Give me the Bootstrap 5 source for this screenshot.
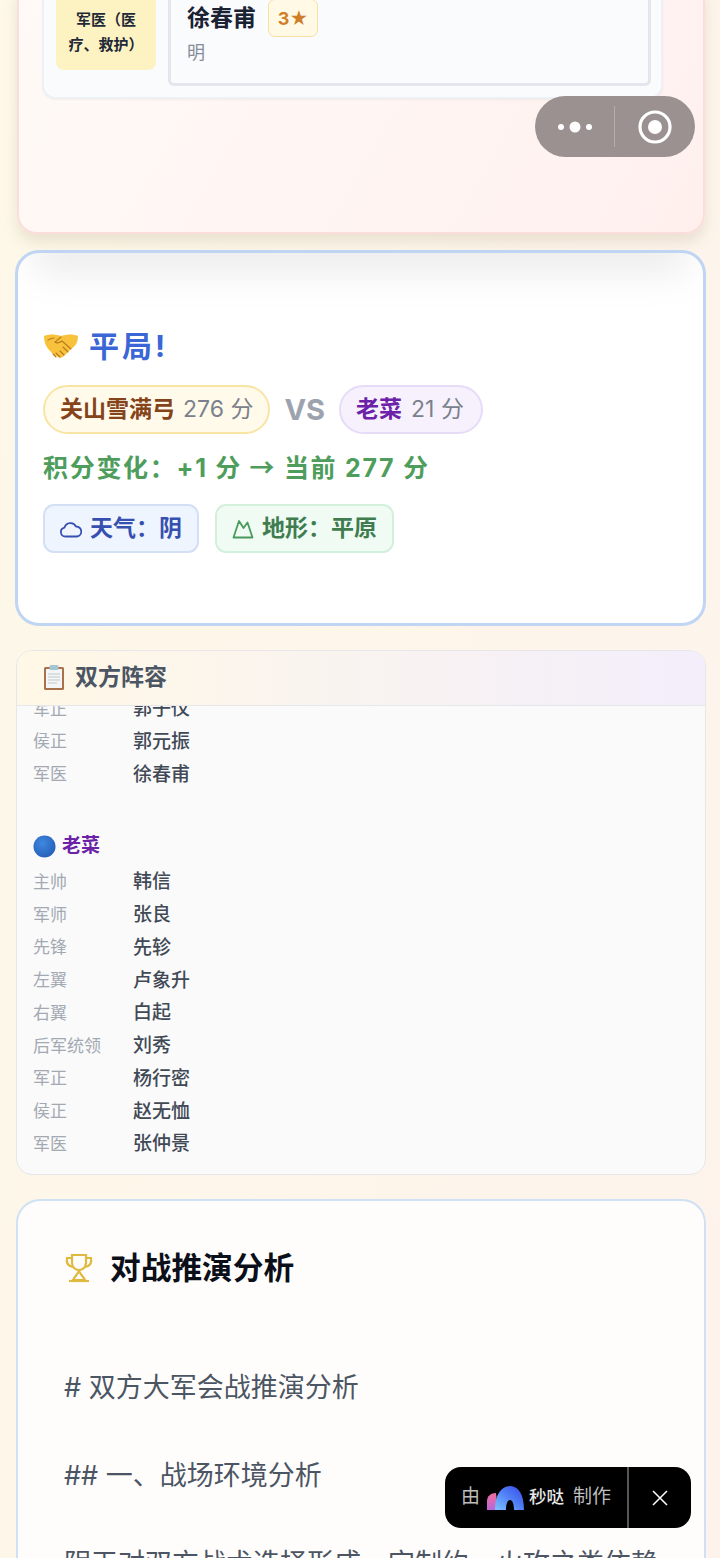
<!DOCTYPE html>
<html lang="zh">
  <head>
    <meta charset="utf-8">
    <title>对战结果</title>
    <link href="https://cdn.jsdelivr.net/npm/bootstrap@5.3.0/dist/css/bootstrap.min.css" rel="stylesheet">
    <style>
      html, body { height: 1558px; overflow: hidden; }
      body {
        font-family: "Inter", "Noto Sans CJK SC", sans-serif;
        background: linear-gradient(100deg, #fdf8e8, #fdf3ec);
        color: #1f2937;
      }
      .page-wrap { position: relative; height: 1558px; overflow: hidden; padding: 0 14px 0 16px; }

      /* 上方被滚动裁掉的卡片 */
      .general-panel {
        height: 254px; margin-top: -20px; margin-left: 1px; margin-right: 1px; padding: 0 40px 0 23px;
        border: 2px solid #fbdedc; border-radius: 20px;
        background: linear-gradient(120deg, #fffaf7, #fff0ee);
        box-shadow: 0 8px 14px rgba(120, 100, 60, .14);
      }
      .general-row {
        height: 117px; padding: 0 10px 0 12px;
        background: #f9fbfd; border: 2px solid #edf0f5; border-top: 0;
        border-radius: 0 0 14px 14px; box-shadow: 0 1px 2px rgba(0,0,0,.05);
      }
      .role-tag {
        width: 100px; height: 88px; padding: 25px 7px 0; border-radius: 8px; margin-right: 12px;
        background: #fdf3c2; color: #1f2937; font-size: 15px; font-weight: 700; line-height: 25px; text-align: center;
      }
      .general-detail {
        height: 104px; padding: 17px 16px 0; background: #f9fbfd;
        border: 3px solid #e3e6ec; border-top: 0; border-radius: 0 0 6px 6px;
      }
      .general-name { font-size: 23px; font-weight: 700; color: #1a2233; line-height: 36px; }
      .star-tag {
        width: 50px; height: 38px; margin-left: 12px; border: 1px solid #f7e0a0; border-radius: 7px;
        background: #fff9e6; color: #d07f28; font-size: 18px; font-weight: 700;
      }
      .general-era { font-size: 18px; color: #858c99; line-height: 28px; margin-top: 2px; }

      /* 结果卡片 */
      .result-panel {
        height: 376px; margin-top: 16px; margin-left: -1px; padding: 75px 25px 0; position: relative;
        border: 3px solid #bfd5f3; border-radius: 24px; background: #fff; overflow: hidden;
      }
      .result-panel::before {
        content: ""; position: absolute; top: -24px; left: 16px; right: 16px; height: 44px;
        background: rgba(0, 0, 0, .075); filter: blur(18px);
      }
      .result-title { height: 36px; font-size: 30px; font-weight: 700; color: #3b66d6; line-height: 36px; gap: 10px; }
      .result-title span { letter-spacing: 3px; }
      .player-pill {
        height: 49px; padding: 0 15px; border-radius: 25px; border: 2px solid; font-size: 23px; color: #7b818c;
      }
      .pill-gold { background: #fffaea; border-color: #f8e5a6; }
      .pill-purple { background: #f6f1fd; border-color: #e7dcf8; gap: 9px; padding-right: 17px; }
      .pill-gold b { color: #85431a; }
      .pill-purple b { color: #6b21a8; }
      .vs-text { font-size: 29px; font-weight: 700; color: #9ca3af; margin: 0 14px; }
      .score-line { font-size: 25px; font-weight: 700; color: #4e9d5c; line-height: 36px; margin-top: 16px; letter-spacing: 1.7px; height: 36px; }
      .score-arrow { font-family: "Noto Sans CJK SC", sans-serif; line-height: 1; }
      .env-tag {
        height: 49px; padding: 0 15px; border-radius: 11px; border: 2px solid; font-size: 23px; font-weight: 700;
      }
      .env-blue { background: #eff5ff; border-color: #d2dff5; color: #3650b0; }
      .env-green { background: #effbf3; border-color: #d3f0dc; color: #3f7d50; }
      .env-row { gap: 16px; margin-top: 18px; }
      .pill-row { margin-top: 21px; }

      /* 双方阵容 */
      .roster-panel {
        height: 525px; margin-top: 24px; overflow: hidden;
        border: 1px solid #e5e7eb; border-radius: 16px; background: #fafafa;
      }
      .roster-head {
        height: 55px; padding: 0 24px 2px; font-size: 23px; font-weight: 700; color: #4b5563;
        background: linear-gradient(90deg, #fff8e6, #f3eefb); border-bottom: 1px solid #e5e7eb;
      }
      .roster-scroll { height: 468px; overflow: hidden; padding: 0 16px; }
      .roster-list { margin-top: -13px; }
      .roster-row { height: 32.75px; font-size: 19px; font-weight: 500; color: #414956; }
      .roster-row span:first-child { width: 100px; font-size: 17px; font-weight: 400; color: #a3a9b3; }
      .side-name { font-size: 19px; font-weight: 700; color: #6b21a8; margin-top: 38px; margin-bottom: 3px; height: 34px; gap: 6px; }

      /* 推演分析 */
      .analysis-panel {
        height: 500px; margin-top: 24px; padding: 0 46px;
        border: 2px solid #d0e0f5; border-bottom: 0; border-radius: 24px 24px 0 0; background: #fffdfb;
      }
      .analysis-title { margin-top: 45px; height: 44px; font-size: 30.7px; font-weight: 700; color: #0b0f19; }
      .trophy-icon { margin-right: 16px; }
      .analysis-text { font-size: 27px; color: #4b5563; line-height: 40px; margin: 0 0 48px; white-space: nowrap; }
      .analysis-text:first-of-type { margin-top: 78px; }

      /* 浮层 */
      .capsule-menu {
        position: absolute; left: 535px; top: 96px; width: 160px; height: 61px; border-radius: 31px;
        background: #9a9190;
      }
      .capsule-menu i { display: block; width: 1px; height: 41px; margin-left: -1px; background: #b5aeac; }
      .capsule-menu > div { width: 80px; }
      .made-by {
        position: absolute; left: 445px; top: 1467px; width: 246px; height: 61px; border-radius: 16px;
        background: #000; color: #bdbdbd; font-size: 19px;
      }
      .made-by-text { padding-left: 16px; gap: 7px; }
      .made-by b { color: #e8e8e8; font-size: 17.5px; font-weight: 500; margin: 0 2px 0 -2px; }
      .made-by i { display: block; width: 2px; height: 61px; background: #555; flex-shrink: 0; }
      .close-box { width: 62px; flex-shrink: 0; }
    </style>
  </head>
  <body>
    <div class="page-wrap">
      <!-- 将领卡片（被滚动裁掉） -->
      <div class="general-panel">
        <div class="general-row d-flex align-items-start">
          <div class="role-tag flex-shrink-0">军医（医疗、救护）</div>
          <div class="general-detail flex-grow-1">
            <div class="d-flex align-items-center">
              <span class="general-name">徐春甫</span>
              <span class="star-tag d-inline-flex align-items-center justify-content-center">3★</span>
            </div>
            <div class="general-era">明</div>
          </div>
        </div>
      </div>

      <!-- 结果 -->
      <div class="result-panel">
        <div class="result-title d-flex align-items-center">
          <svg width="36" height="26" viewBox="0 0 36 26">
            <path d="M1 3c5-2 10-2 17 0c7-2 12-2 17 0c0 8-4 11-8 14l-6 6c-2 2-4 2-6 1c-3-1-5-3-7-5C4 15 1 11 1 3z" fill="#f8c23c"/>
            <path d="M18 4l-6 5c2 2 4 1 7-1l9 8M11 5c-2 0-4 1-6 2M13 24l-3-3M17 24l-4-4M21 22l-4-4M25 19l-5-5" fill="none" stroke="#b97a1e" stroke-width="1.1" stroke-linecap="round"/>
          </svg>
          <span>平局!</span>
        </div>
        <div class="pill-row d-flex align-items-center">
          <span class="player-pill pill-gold d-inline-flex align-items-center gap-2"><b>关山雪满弓</b><span>276 分</span></span>
          <span class="vs-text">VS</span>
          <span class="player-pill pill-purple d-inline-flex align-items-center"><b>老菜</b><span>21 分</span></span>
        </div>
        <div class="score-line">积分变化：+1 分 <span class="score-arrow">→</span> 当前 277 分</div>
        <div class="env-row d-flex">
          <span class="env-tag env-blue d-inline-flex align-items-center gap-2">
            <svg width="22" height="18" viewBox="0 0 22 18" fill="none" stroke="#3650b0" stroke-width="1.8"><path d="M5.500 16.500a4.500 4.500 0 0 1-1-8.900A6.200 6.200 0 0 1 16 6.500a5 5 0 0 1 .5 10z" stroke-linejoin="round"/></svg>
            <span>天气：阴</span>
          </span>
          <span class="env-tag env-green d-inline-flex align-items-center gap-2">
            <svg width="22" height="20" viewBox="0 0 22 20" fill="none" stroke="#4a9a5e" stroke-width="1.8"><path d="M1.500 18.500L7 2l4.500 7L15.500 3.500l5 15z" stroke-linejoin="round"/></svg>
            <span>地形：平原</span>
          </span>
        </div>
      </div>

      <!-- 双方阵容 -->
      <div class="roster-panel">
        <div class="roster-head d-flex align-items-center gap-2">
          <svg width="26" height="26" viewBox="0 0 26 26">
            <rect x="3" y="3" width="20" height="23" rx="1.500" fill="#a9714b"/>
            <rect x="5" y="5" width="16" height="19" fill="#f4f5f6"/>
            <rect x="8.500" y="1" width="9" height="5" rx="1.500" fill="#a5c4d4"/>
            <path d="M7 10h12M7 13h12M7 16h12M7 19h9" stroke="#c4c9ce" stroke-width="1"/>
          </svg>
          <span>双方阵容</span>
        </div>
        <div class="roster-scroll">
          <div class="roster-list">
            <div class="roster-row d-flex align-items-center"><span>军正</span><span>郭子仪</span></div>
            <div class="roster-row d-flex align-items-center"><span>侯正</span><span>郭元振</span></div>
            <div class="roster-row d-flex align-items-center"><span>军医</span><span>徐春甫</span></div>
            <div class="side-name d-flex align-items-center">
              <svg width="23" height="23" viewBox="0 0 24 24"><defs><radialGradient id="blueBall" cx=".4" cy=".35" r=".7"><stop offset="0" stop-color="#3f87e0"/><stop offset="1" stop-color="#2460b8"/></radialGradient></defs><circle cx="12" cy="12" r="11.500" fill="url(#blueBall)"/></svg>
              <span>老菜</span>
            </div>
            <div class="roster-row d-flex align-items-center"><span>主帅</span><span>韩信</span></div>
            <div class="roster-row d-flex align-items-center"><span>军师</span><span>张良</span></div>
            <div class="roster-row d-flex align-items-center"><span>先锋</span><span>先轸</span></div>
            <div class="roster-row d-flex align-items-center"><span>左翼</span><span>卢象升</span></div>
            <div class="roster-row d-flex align-items-center"><span>右翼</span><span>白起</span></div>
            <div class="roster-row d-flex align-items-center"><span>后军统领</span><span>刘秀</span></div>
            <div class="roster-row d-flex align-items-center"><span>军正</span><span>杨行密</span></div>
            <div class="roster-row d-flex align-items-center"><span>侯正</span><span>赵无恤</span></div>
            <div class="roster-row d-flex align-items-center"><span>军医</span><span>张仲景</span></div>
          </div>
        </div>
      </div>

      <!-- 推演分析 -->
      <div class="analysis-panel">
        <div class="analysis-title d-flex align-items-center">
          <svg class="trophy-icon" width="30" height="30" viewBox="0 0 30 30" fill="none" stroke="#e0b93f" stroke-width="2.200">
            <path d="M8 2h14v8c0 4-3 7-7 7s-7-3-7-7z"/>
            <path d="M8 5H3c-1 5 1 8 6 9M22 5h5c1 5-1 8-6 9"/>
            <path d="M15 17c0 3-4 6-6 10h12c-2-4-6-7-6-10z"/>
            <path d="M5 28h20"/>
          </svg>
          <span>对战推演分析</span>
        </div>
        <p class="analysis-text"># 双方大军会战推演分析</p>
        <p class="analysis-text">## 一、战场环境分析</p>
        <p class="analysis-text">阴天对双方战术选择形成一定制约，火攻之类依赖</p>
      </div>

      <!-- 小程序胶囊 -->
      <div class="capsule-menu d-flex align-items-center">
        <div class="d-flex align-items-center justify-content-center">
          <svg width="36" height="14" viewBox="0 0 36 14" fill="#fff"><circle cx="4" cy="7" r="3"/><circle cx="18" cy="7" r="5.500"/><circle cx="32" cy="7" r="3"/></svg>
        </div>
        <i></i>
        <div class="d-flex align-items-center justify-content-center">
          <svg width="34" height="34" viewBox="0 0 34 34"><circle cx="17" cy="17" r="15" fill="none" stroke="#fff" stroke-width="3.200"/><circle cx="17" cy="17" r="7" fill="#fff"/></svg>
        </div>
      </div>

      <!-- 制作标识 -->
      <div class="made-by d-flex align-items-center">
        <div class="made-by-text d-flex align-items-center flex-grow-1">
          <span>由</span>
          <svg width="37" height="24" viewBox="0 0 37 24">
            <defs>
              <linearGradient id="logoA" x1="0" y1="0" x2="0" y2="1"><stop offset="0" stop-color="#f26f9c"/><stop offset="1" stop-color="#b865d8"/></linearGradient>
              <linearGradient id="logoB" x1="0" y1="1" x2="1" y2="0"><stop offset="0" stop-color="#7cc4ff"/><stop offset=".55" stop-color="#4d7af5"/><stop offset="1" stop-color="#3a48e8"/></linearGradient>
            </defs>
            <path d="M0 24V15C0 10 4 7 9 7L11 24z" fill="url(#logoA)"/>
            <path d="M8 24C8 9 14 0 23 0c9 0 14 9 14 24H27c0-6-1.500-10-4-10s-4 4-4 10z" fill="url(#logoB)"/>
          </svg>
          <b>秒哒</b>
          <span>制作</span>
        </div>
        <i></i>
        <div class="close-box d-flex align-items-center justify-content-center">
          <svg width="16" height="16" viewBox="0 0 16 16" stroke="#fff" stroke-width="1.500"><path d="M1 1l14 14M15 1L1 15"/></svg>
        </div>
      </div>
    </div>
    <script src="https://cdn.jsdelivr.net/npm/bootstrap@5.3.0/dist/js/bootstrap.bundle.min.js"></script>
  </body>
</html>
